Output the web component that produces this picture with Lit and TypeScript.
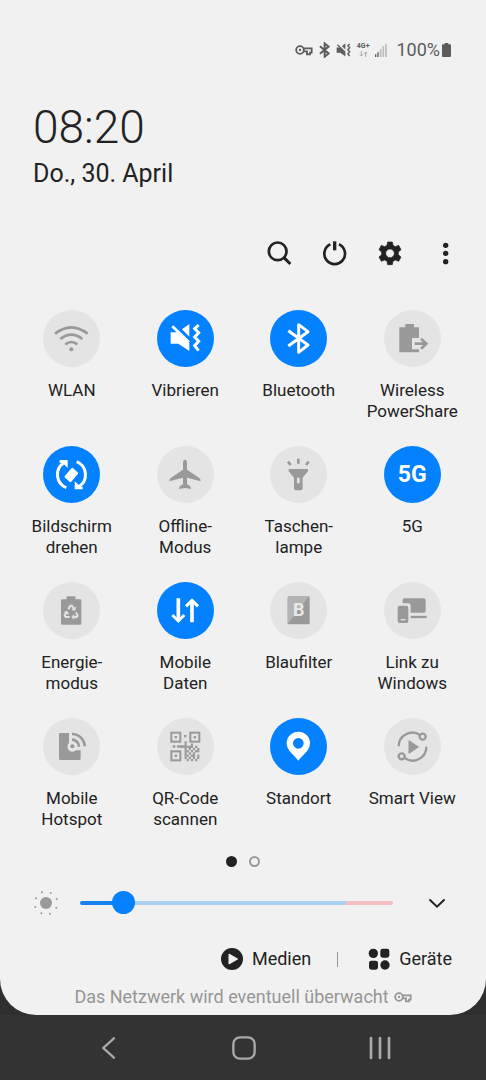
import { LitElement, html, svg, css } from "lit";
import { customElement, state } from "lit/decorators.js";
import { classMap } from "lit/directives/class-map.js";

const keyShape = svg`
  <circle cx="15" cy="15" r="11.5" fill="none" stroke="currentColor" stroke-width="5.5"/>
  <circle cx="15" cy="15" r="3.5" fill="currentColor"/>
  <path d="M25 10H50V23H45V28H36V19H25" fill="none" stroke="currentColor" stroke-width="5.5"/>`;

const muteShape = svg`
  <path d="M41 67H60L97 100V123L64 101H41Z M75 58L97 42V80Z" fill="currentColor"/>
  <path d="M46 49L96 97" stroke="currentColor" stroke-width="8" fill="none"/>
  <path d="M125 45L113 56L125 68L113 81L125 94L113 107L125 122" stroke="currentColor" stroke-width="9" fill="none"/>`;

const qrModules = [
  "..#......",
  "..#..#...",
  "#.####.#.",
  "..#.#.#.#",
  "..##.#.##",
  "..#.#.#..",
  "..##.##.#",
  "..#.#.#.#",
  "...#.#.#.",
];

const icons: Record<string, unknown> = {
  wifi: svg`
    <g fill="none" stroke="currentColor" stroke-width="8">
      <path d="M36 71Q85 33 134 71"/><path d="M52 87Q85 61 118 87"/><path d="M67 103Q85 89 103 103"/>
    </g>
    <circle cx="85" cy="118" r="6" fill="currentColor"/>`,
  mute: muteShape,
  bluetooth: svg`
    <path d="M55 62L114 105L86 127V44L114 65L55 108" fill="none" stroke="currentColor" stroke-width="9" stroke-linejoin="round"/>`,
  power: svg`
    <path d="M64 42H90V52H105V84H84V118H105V127H46V52H64Z" fill="currentColor"/>
    <path d="M92 101H128M111 86L127 101L111 116" fill="none" stroke="currentColor" stroke-width="8"/>`,
  rotate: svg`
    <path d="M88 69L102 82L82 105L68 92Z" fill="currentColor" stroke="currentColor" stroke-width="7" stroke-linejoin="round"/>
    <path d="M70 125A42 42 0 0 1 62 51M101 47A42 42 0 0 1 107 122" fill="none" stroke="currentColor" stroke-width="9"/>
    <path d="M50 42H74V66L66 58L58 51H50Z M95 130V106L104 114L111 122H119V130Z" fill="currentColor"/>`,
  plane: svg`
    <path d="M84 41C80 41 78 46 78 51V71L41 96Q37 99 37 106L78 95V114L69 121Q66 124 66 129L84 126L102 129Q102 124 99 121L90 114V95L131 106Q131 99 127 96L90 71V51C90 46 88 41 84 41Z" fill="currentColor"/>`,
  torch: svg`
    <path d="M85 38V53M54 47L62 57M116 47L108 57" stroke="currentColor" stroke-width="8" fill="none"/>
    <path fill-rule="evenodd" d="M56 69H114V76L98 95V127Q98 133 92 133H78Q72 133 72 127V95L56 76Z M81 95V112H89V95Z" fill="currentColor"/>`,
  battery: svg`
    <path d="M71 43H97V52H112Q115 52 115 55V125Q115 128 112 128H57Q54 128 54 125V55Q54 52 57 52H71Z" fill="currentColor"/>
    <g fill="none" stroke="#e4e4e4" stroke-width="6">
      <path d="M76 82L82 71H87L94 82M71 90L65 101L68 105H80M99 91L104 101L101 105H92"/>
      <path d="M98 75L95 84L87 82M93 99L88 105L93 111M64 92L72 89L76 97" stroke-width="4"/>
    </g>`,
  data: svg`
    <path d="M64 49V115M105 121V56" fill="none" stroke="currentColor" stroke-width="11"/>
    <path d="M46 99L64 117L82 99M87 73L105 55L123 73" fill="none" stroke="currentColor" stroke-width="9"/>`,
  filter: svg`
    <rect x="53" y="43" width="66" height="84" rx="4" fill="currentColor"/>
    <path d="M57 43H117L53 126V47Q53 43 57 43Z" fill="#b4b4b4"/>
    <text class="letter" x="86" y="103" text-anchor="middle">B</text>`,
  link: svg`
    <path d="M61 49H120Q125 49 125 54V87Q125 92 120 92H80V71Q80 64 72 64H56V54Q56 49 61 49Z" fill="currentColor"/>
    <path d="M80 105H128" stroke="currentColor" stroke-width="7"/>
    <rect x="41" y="71" width="32" height="52" rx="6" fill="currentColor"/>
    <path d="M50 113H64" stroke="#e4e4e4" stroke-width="4"/>`,
  hotspot: svg`
    <path d="M52 45H78V75A15 15 0 0 0 99 97H113V122Q113 126 109 126H52Q48 126 48 122V49Q48 45 52 45Z" fill="currentColor"/>
    <circle cx="88" cy="85" r="6" fill="currentColor"/>
    <path d="M87 65A21 21 0 0 1 108 86M87 48A38 38 0 0 1 125 85" fill="none" stroke="currentColor" stroke-width="8"/>`,
  qr: svg`
    <g fill="none" stroke="currentColor" stroke-width="6">
      <rect x="43" y="44" width="27" height="27"/><rect x="100" y="44" width="27" height="27"/><rect x="43" y="100" width="27" height="27"/>
    </g>
    <g fill="currentColor">
      <rect x="53" y="54" width="7" height="7"/><rect x="110" y="54" width="7" height="7"/><rect x="53" y="110" width="7" height="7"/>
      <rect x="81" y="51" width="7" height="7"/><rect x="47" y="82" width="8" height="7"/><rect x="60" y="82" width="24" height="7"/>
      ${qrModules.map((row, y) =>
        [...row].map((c, x) =>
          c === "#" ? svg`<rect x=${70 + x * 6.3} y=${70 + y * 6.6} width="6.6" height="6.8"/>` : null))}
    </g>`,
  pin: svg`
    <path fill-rule="evenodd" d="M85 128C72 112 50 97 50 76A35 35 0 0 1 120 76C120 97 98 112 85 128Z M85 60A16 16 0 1 0 85 92A16 16 0 1 0 85 60Z" fill="currentColor"/>`,
  cast: svg`
    <g fill="none" stroke="currentColor" stroke-width="7">
      <path d="M44 85A41 41 0 0 1 108 51M127 86A41 41 0 0 1 62 120"/>
      <circle cx="116" cy="56" r="9"/><circle cx="53" cy="115" r="9"/>
    </g>
    <path d="M75 68L103 87L75 106Z" fill="currentColor" stroke="currentColor" stroke-width="3" stroke-linejoin="round"/>`,
};

interface Tile {
  lines: string[];
  icon?: string;
  on?: boolean;
}

@customElement("app-root")
export class AppRoot extends LitElement {
  static styles = css`
    :host {
      display: flex;
      flex-direction: column;
      min-height: 100vh;
      background: #2f2f2f;
      color: #222;
      font-family: Roboto, "Liberation Sans", sans-serif;
      font-size: 18px;
      line-height: 21px;
    }
    * { box-sizing: border-box; }
    svg { display: block; }
    button {
      border: 0;
      padding: 0;
      background: none;
      color: inherit;
      font: inherit;
      cursor: pointer;
    }
    .panel {
      flex: 1;
      display: flex;
      flex-direction: column;
      padding-bottom: 6px;
      background: #f1f1f1;
      border-radius: 0 0 36px 36px;
    }
    .status {
      display: flex;
      justify-content: flex-end;
      align-items: center;
      gap: 6px;
      padding: 39px 35px 0 0;
      line-height: 22px;
      color: #5c5c5c;
    }
    .net { font-size: 7px; line-height: 7px; font-weight: 700; }
    .net svg { margin: 1px auto 0; color: #aaa; }
    .charge { display: flex; align-items: center; gap: 2px; margin-left: 3px; }
    .head { padding: 38px 33px 0; }
    .clock { display: block; font-size: 46px; line-height: 56px; font-weight: 300; }
    .date { display: block; margin-top: 3px; font-size: 25px; line-height: 32px; }
    .actions {
      display: flex;
      justify-content: flex-end;
      gap: 27px;
      padding: 50px 27px 0;
    }
    .tiles {
      display: grid;
      grid-template-columns: repeat(4, 1fr);
      row-gap: 24px;
      padding: 42px 17px 0 15px;
      font-size: 17px;
    }
    .tile {
      display: flex;
      flex-direction: column;
      align-items: center;
      gap: 13px;
      min-height: 112px;
      white-space: nowrap;
    }
    .disc {
      display: grid;
      place-items: center;
      width: 57px;
      height: 57px;
      border-radius: 50%;
      background: #e4e4e4;
      color: #999;
    }
    .disc.on { background: #0381fe; color: #fff; }
    .word { font-size: 23px; font-weight: 700; }
    .letter { font-size: 54px; font-weight: 700; fill: #e8e8e8; }
    .line { display: block; }
    .pages { display: flex; justify-content: center; gap: 12px; padding-top: 26px; }
    .page { width: 11px; height: 11px; border-radius: 50%; border: 2px solid #999; }
    .page.current { background: #222; border-color: #222; }
    .brightness {
      display: flex;
      align-items: center;
      gap: 22px;
      padding: 24px 37px 0 34px;
    }
    .more { margin-left: 10px; }
    .slider {
      appearance: none;
      flex: 1;
      min-width: 0;
      height: 24px;
      margin: 0;
      background: none;
    }
    .slider::-webkit-slider-runnable-track {
      height: 4px;
      border-radius: 2px;
      background: linear-gradient(to right, #1581ec 14%, #abcff1 14%, #abcff1 85%, #f4c0c2 85%);
    }
    .slider::-webkit-slider-thumb {
      appearance: none;
      width: 23px;
      height: 23px;
      margin-top: -10px;
      border-radius: 50%;
      background: #0381fe;
    }
    .links {
      display: flex;
      justify-content: flex-end;
      align-items: center;
      gap: 26px;
      padding: 32px 34px 0;
    }
    .link { display: flex; align-items: center; gap: 9px; line-height: 24px; }
    .rule { width: 1px; height: 15px; margin-right: 4px; background: #999; }
    .notice {
      display: flex;
      justify-content: center;
      align-items: center;
      gap: 5px;
      margin: 0;
      padding-top: 15px;
      line-height: 22px;
      color: #969696;
    }
    .nav {
      display: flex;
      justify-content: center;
      padding-left: 3px;
      background: #333;
      color: #aaa;
    }
    .key { display: grid; place-items: center; width: 28%; height: 65px; }
  `;

  @state() private tiles: Tile[] = [
    { lines: ["WLAN"], icon: "wifi" },
    { lines: ["Vibrieren"], icon: "mute", on: true },
    { lines: ["Bluetooth"], icon: "bluetooth", on: true },
    { lines: ["Wireless", "PowerShare"], icon: "power" },
    { lines: ["Bildschirm", "drehen"], icon: "rotate", on: true },
    { lines: ["Offline-", "Modus"], icon: "plane" },
    { lines: ["Taschen-", "lampe"], icon: "torch" },
    { lines: ["5G"], on: true },
    { lines: ["Energie-", "modus"], icon: "battery" },
    { lines: ["Mobile", "Daten"], icon: "data", on: true },
    { lines: ["Blaufilter"], icon: "filter" },
    { lines: ["Link zu", "Windows"], icon: "link" },
    { lines: ["Mobile", "Hotspot"], icon: "hotspot" },
    { lines: ["QR-Code", "scannen"], icon: "qr" },
    { lines: ["Standort"], icon: "pin", on: true },
    { lines: ["Smart View"], icon: "cast" },
  ];

  private toggle(tile: Tile) {
    this.tiles = this.tiles.map((t) => (t === tile ? { ...t, on: !t.on } : t));
  }

  private renderTile(tile: Tile) {
    return html`
      <button class="tile" aria-pressed=${tile.on ? "true" : "false"} @click=${() => this.toggle(tile)}>
        <span class=${classMap({ disc: true, on: !!tile.on })}>
          ${tile.icon
            ? html`<svg width="57" height="57" viewBox="0 0 171 171" aria-hidden="true">${icons[tile.icon]}</svg>`
            : html`<span class="word">5G</span>`}
        </span>
        <span>${tile.lines.map((l) => html`<span class="line">${l}</span>`)}</span>
      </button>`;
  }

  render() {
    return html`
      <main class="panel">
        <div class="status">
          <svg width="18" height="11" viewBox="0 0 54 33">${keyShape}</svg>
          <svg width="11" height="16" viewBox="52 36 66 98"><path d="M57 62L110 106L86 126V45L110 64L57 108" fill="none" stroke="currentColor" stroke-width="12"/></svg>
          <svg width="15" height="14" viewBox="38 38 94 90">${muteShape}</svg>
          <div class="net">4G+
            <svg width="9" height="6" viewBox="0 0 27 18"><path d="M7 0V15M2 10L7 15L12 10M20 18V3M15 8L20 3L25 8" fill="none" stroke="currentColor" stroke-width="3"/></svg>
          </div>
          <svg width="12" height="14" viewBox="0 0 36 42">
            <path d="M2 34V42M9 28V42" stroke="currentColor" stroke-width="4"/>
            <path d="M17 19V42M25 10V42M33 2V42" stroke="#bbb" stroke-width="5"/>
          </svg>
          <span class="charge">100%
            <svg width="9" height="14" viewBox="0 0 27 42"><path d="M8 0H19V4H24Q27 4 27 7V39Q27 42 24 42H3Q0 42 0 39V7Q0 4 3 4H8Z" fill="currentColor"/></svg>
          </span>
        </div>

        <header class="head">
          <time class="clock">08:20</time>
          <time class="date">Do., 30. April</time>
        </header>

        <div class="actions">
          <button aria-label="Suchen">
            <svg width="28" height="28" viewBox="0 0 84 84"><circle cx="35" cy="34" r="26.5" fill="none" stroke="currentColor" stroke-width="8"/><path d="M54 53L73 72" stroke="currentColor" stroke-width="9"/></svg>
          </button>
          <button aria-label="Ausschalten">
            <svg width="28" height="28" viewBox="0 0 84 84"><path d="M28 13A31 31 0 1 0 54 13" fill="none" stroke="currentColor" stroke-width="8"/><path d="M41 4V31" stroke="currentColor" stroke-width="10"/></svg>
          </button>
          <button aria-label="Einstellungen">
            <svg width="28" height="28" viewBox="0 0 84 84">
              <path fill-rule="evenodd" d="M35 6H49L51 16L58 20L68 16L75 29L67 36V44L75 51L68 64L58 60L51 64L49 74H35L33 64L26 60L16 64L9 51L17 44V36L9 29L16 16L26 20L33 16Z M42 27A13 13 0 1 0 42 53A13 13 0 1 0 42 27Z" fill="currentColor" stroke="currentColor" stroke-width="2" stroke-linejoin="round"/>
            </svg>
          </button>
          <button aria-label="Weitere Optionen">
            <svg width="28" height="28" viewBox="0 0 84 84" fill="currentColor"><circle cx="44" cy="16" r="8"/><circle cx="44" cy="40" r="8"/><circle cx="44" cy="65" r="8"/></svg>
          </button>
        </div>

        <section class="tiles">${this.tiles.map((t) => this.renderTile(t))}</section>

        <div class="pages"><span class="page current"></span><span class="page"></span></div>

        <div class="brightness">
          <svg width="24" height="24" viewBox="0 0 72 72" fill="#999">
            <circle cx="36" cy="36" r="18"/>
            <circle cx="24" cy="4" r="3"/><circle cx="50" cy="6" r="3"/><circle cx="68" cy="24" r="3"/><circle cx="67" cy="50" r="3"/>
            <circle cx="48" cy="68" r="3"/><circle cx="22" cy="67" r="3"/><circle cx="4" cy="48" r="3"/><circle cx="6" cy="22" r="3"/>
          </svg>
          <input class="slider" type="range" min="0" max="100" value="11" aria-label="Helligkeit">
          <button class="more" aria-label="Mehr anzeigen">
            <svg width="24" height="24" viewBox="0 0 72 72"><path d="M15 27L36 47L57 27" fill="none" stroke="currentColor" stroke-width="6" stroke-linecap="round"/></svg>
          </button>
        </div>

        <div class="links">
          <button class="link">
            <svg width="22" height="22" viewBox="0 0 66 66"><circle cx="33" cy="33" r="33" fill="currentColor"/><path d="M24 18L50 33L24 48Z" fill="#f1f1f1" stroke="#f1f1f1" stroke-width="3" stroke-linejoin="round"/></svg>
            Medien
          </button>
          <span class="rule"></span>
          <button class="link">
            <svg width="22" height="22" viewBox="0 0 66 66" fill="currentColor"><circle cx="16" cy="16" r="14"/><rect x="37" y="2" width="27" height="27" rx="7"/><rect x="3" y="38" width="27" height="27" rx="7"/><circle cx="51" cy="51" r="14"/></svg>
            Geräte
          </button>
        </div>

        <p class="notice">
          Das Netzwerk wird eventuell überwacht
          <svg width="18" height="11" viewBox="0 0 54 33">${keyShape}</svg>
        </p>
      </main>

      <nav class="nav">
        <button class="key" aria-label="Zurück">
          <svg width="24" height="24" viewBox="0 0 72 72"><path d="M53 5L19 36L53 67" fill="none" stroke="currentColor" stroke-width="7"/></svg>
        </button>
        <button class="key" aria-label="Startseite">
          <svg width="24" height="24" viewBox="0 0 72 72"><rect x="4" y="4" width="64" height="64" rx="20" fill="none" stroke="currentColor" stroke-width="7"/></svg>
        </button>
        <button class="key" aria-label="Letzte Apps">
          <svg width="24" height="24" viewBox="0 0 72 72"><path d="M9 6V66M36 6V66M63 6V66" stroke="currentColor" stroke-width="8" stroke-linecap="round"/></svg>
        </button>
      </nav>`;
  }
}
